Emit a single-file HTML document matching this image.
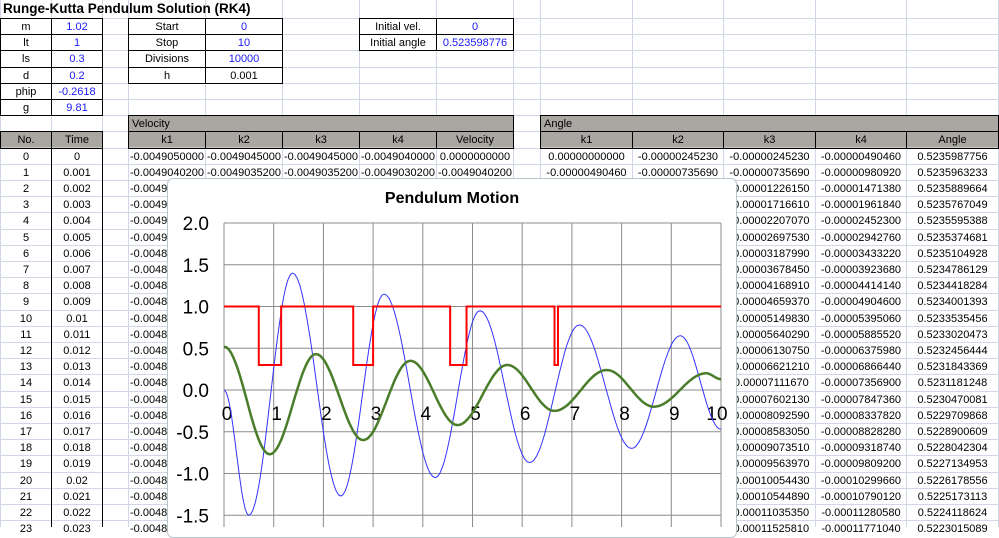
<!DOCTYPE html>
<html><head><meta charset="utf-8">
<style>
body{margin:0;width:999px;height:527px;overflow:hidden;background:#fff;font-family:"Liberation Sans",sans-serif;position:relative}
.c{position:absolute;font-size:11px;line-height:16px;text-align:center;color:#000;white-space:nowrap;overflow:hidden;box-sizing:border-box}
.b{color:#1a1aff}
#chart{position:absolute;left:167px;top:178px;width:570px;height:360px;background:#fff;border:1px solid #b8c4cc;border-radius:6px;box-sizing:border-box}
</style></head><body>
<svg id="grid" width="999" height="527" style="position:absolute;left:0;top:0"></svg>
<div id="cells"></div>
<div id="chart"></div>
<svg id="plot" width="999" height="527" style="position:absolute;left:0;top:0"></svg>
<script>
var X=[0,51,102,128,205,282,359,436,513,540,632,723,815,906,998];
function rowTop(r){if(r==0)return 0; return 18+(r-1)*16.2;}
var g='';
for(var i=0;i<X.length;i++)g+='<line x1="'+(X[i]+.5)+'" y1="0" x2="'+(X[i]+.5)+'" y2="527" stroke="#d0d7e5"/>';
for(var r=1;r<34;r++){var y=Math.round(rowTop(r))+.5;g+='<line x1="0" y1="'+y+'" x2="999" y2="'+y+'" stroke="#d0d7e5"/>';}
function box(c1,c2,r1,r2){var x1=X[c1]+.5,x2=X[c2]+.5,y1=Math.round(rowTop(r1))+.5,y2=Math.round(rowTop(r2))+.5;
 return '<rect x="'+x1+'" y="'+y1+'" width="'+(x2-x1)+'" height="'+(y2-y1)+'" fill="none" stroke="#000"/>';}
var HR=7,HH=8,D0=9;
g+='<rect x="128" y="'+rowTop(HR)+'" width="385" height="32.4" fill="#aaa6a2"/>';
g+='<rect x="540" y="'+rowTop(HR)+'" width="458" height="32.4" fill="#aaa6a2"/>';
g+='<rect x="0" y="'+rowTop(HH)+'" width="102" height="16.2" fill="#aaa6a2"/>';
for(var r=1;r<7;r++){g+=box(0,1,r,r+1)+box(1,2,r,r+1);}
for(var r=1;r<5;r++){g+=box(3,4,r,r+1)+box(4,5,r,r+1);}
for(var r=1;r<3;r++){g+=box(6,7,r,r+1)+box(7,8,r,r+1);}
g+=box(3,8,HR,HH)+box(9,14,HR,HH);
for(var c=3;c<8;c++)g+=box(c,c+1,HH,D0);
for(var c=9;c<14;c++)g+=box(c,c+1,HH,D0);
g+=box(0,1,HH,D0)+box(1,2,HH,D0);
g+='<line x1="51.5" y1="'+rowTop(D0)+'" x2="51.5" y2="527" stroke="#000"/><line x1="102.5" y1="'+rowTop(D0)+'" x2="102.5" y2="527" stroke="#000"/>';
document.getElementById('grid').innerHTML=g;
var h='';
function cell(c,r,t,cls,al){var y=Math.round(rowTop(r));h+='<div class="c '+(cls||'')+'" style="left:'+(X[c]+1)+'px;top:'+(y+1)+'px;width:'+(X[c+1]-X[c]-1)+'px;height:15px;'+(al?'text-align:'+al+';padding-left:3px':'')+'">'+t+'</div>';}
h+='<div class="c" style="left:3px;top:1px;font-weight:bold;font-size:13.5px;text-align:left">Runge-Kutta Pendulum Solution (RK4)</div>';
var L=[['m','1.02'],['lt','1'],['ls','0.3'],['d','0.2'],['phip','-0.2618'],['g','9.81']];
L.forEach(function(p,i){cell(0,i+1,p[0]);cell(1,i+1,p[1],'b');});
var S=[['Start','0','b'],['Stop','10','b'],['Divisions','10000','b'],['h','0.001','']];
S.forEach(function(p,i){cell(3,i+1,p[0]);cell(4,i+1,p[1],p[2]);});
cell(6,1,'Initial vel.');cell(7,1,'0','b');cell(6,2,'Initial angle');cell(7,2,'0.523598776','b');
cell(3,HR,'Velocity','', 'left');cell(9,HR,'Angle','','left');
cell(0,HH,'No.');cell(1,HH,'Time');
['k1','k2','k3','k4','Velocity'].forEach(function(t,i){cell(3+i,HH,t);});
['k1','k2','k3','k4','Angle'].forEach(function(t,i){cell(9+i,HH,t);});
function f(v,d){return v.toFixed(d);}
for(var n=0;n<24;n++){var r=D0+n;
 cell(0,r,n);cell(1,r,n==0?'0':String(+(n*0.001).toFixed(3)));
 var k1=-0.004905+0.00000098*n;
 cell(3,r,f(k1,10));cell(4,r,f(k1+0.0000005,10));cell(5,r,f(k1+0.0000005,10));cell(6,r,f(k1+0.000001,10));cell(7,r,n==0?'0.0000000000':f(k1*1,10));
 var a=0.0000024523;
 cell(9,r,n==0?'0.00000000000':f(-a*2*n,11));cell(10,r,f(-a*(2*n+1),11));cell(11,r,f(-a*(2*n+1),11));cell(12,r,f(-a*2*(n+1),11));
 cell(13,r,f(0.5235987756-a*n*n,10));}
document.getElementById('cells').innerHTML=h;
var x0=224,xs=49.7,y0=390,ys=83.5;
function px(t){return x0+t*xs} function py(v){return y0-v*ys}
var p='<text x="452" y="203" font-size="16" font-weight="bold" text-anchor="middle" font-family="Liberation Sans">Pendulum Motion</text>';
for(var i=0;i<=10;i++)p+='<line x1="'+px(i)+'" y1="'+py(2)+'" x2="'+px(i)+'" y2="527" stroke="#8c8c8c"/>';
for(var v=2;v>=-1.5;v-=0.5){p+='<line x1="'+x0+'" y1="'+py(v)+'" x2="'+px(10)+'" y2="'+py(v)+'" stroke="#8c8c8c"/>';
 p+='<text x="209" y="'+(py(v)+7)+'" font-size="19" text-anchor="end" font-family="Liberation Sans">'+v.toFixed(1)+'</text>';}
for(var i=0;i<=10;i++)p+='<text x="'+(px(i)+(i==10?-4:3))+'" y="'+(py(0)+30)+'" font-size="19" text-anchor="middle" font-family="Liberation Sans">'+i+'</text>';
function interp(E){var d='';for(var k=0;k<E.length-1;k++){var a=E[k],b=E[k+1];for(var s=0;s<=20;s++){var u=s/20,w=(1-Math.cos(Math.PI*u))/2;var t=a[0]+(b[0]-a[0])*u,v=a[1]+(b[1]-a[1])*w;d+=(d?'L':'M')+px(t).toFixed(1)+' '+py(v).toFixed(1);}}return d;}
var B=[[0,0],[0.5,-1.5],[1.38,1.4],[2.35,-1.27],[3.22,1.15],[4.25,-1.05],[5.15,0.95],[6.15,-0.87],[7.15,0.78],[8.2,-0.7],[9.18,0.65],[10,-0.47]];
var G=[[0,0.52],[0.92,-0.77],[1.85,0.43],[2.8,-0.6],[3.75,0.35],[4.7,-0.42],[5.7,0.3],[6.65,-0.25],[7.7,0.24],[8.65,-0.2],[9.7,0.2],[10,0.13]];
p+='<path d="'+interp(B)+'" fill="none" stroke="#3333ff" stroke-width="1"/>';
p+='<path d="'+interp(G)+'" fill="none" stroke="#4a7d2a" stroke-width="2.5"/>';
var R=[[0.7,1.15],[2.6,3.0],[4.55,4.88],[6.65,6.72]];var d='M'+px(0)+' '+py(1);
R.forEach(function(q){d+='L'+px(q[0])+' '+py(1)+'L'+px(q[0])+' '+py(0.3)+'L'+px(q[1])+' '+py(0.3)+'L'+px(q[1])+' '+py(1);});
d+='L'+px(10)+' '+py(1);
p+='<path d="'+d+'" fill="none" stroke="#ff0000" stroke-width="2"/>';
document.getElementById('plot').innerHTML=p;
</script>
</body></html>
